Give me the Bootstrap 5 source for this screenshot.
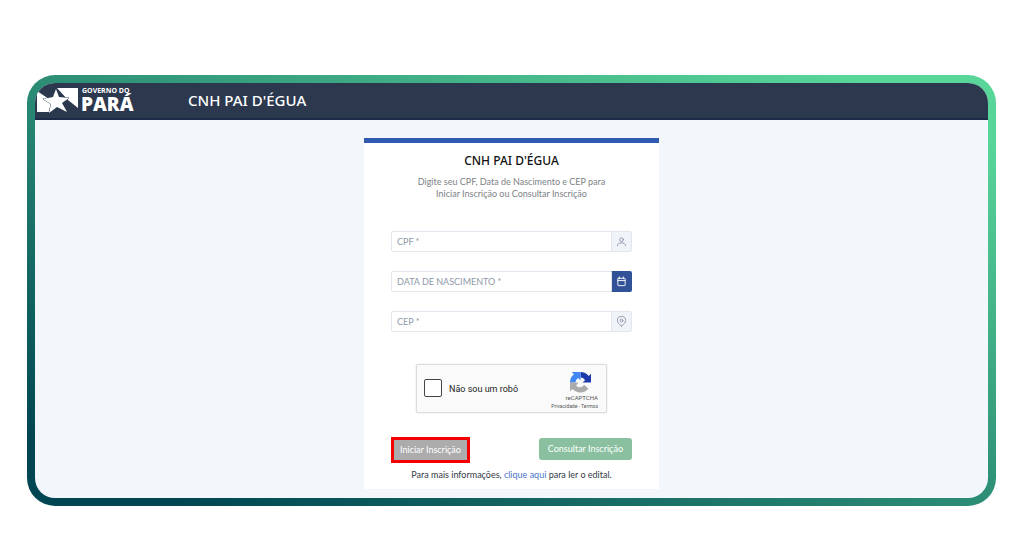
<!DOCTYPE html>
<html lang="pt-BR">
<head>
<meta charset="utf-8">
<meta name="viewport" content="width=device-width, initial-scale=1">
<title>CNH Pai d'Égua</title>
<link href="https://cdn.jsdelivr.net/npm/bootstrap@5.3.0/dist/css/bootstrap.min.css" rel="stylesheet">
<style>
  body { font-family: Lato, "Noto Sans", sans-serif; font-size: 9px; line-height: 12px; color: #333a45; background: #fff; }
  .frame { margin: 75px 28px 30px 27px; padding: 8px; border-radius: 28px; background: linear-gradient(to top right, #004652 8%, #58d599 92%); }
  .screen { border-radius: 20px; background: #f3f6fa; }
  .topbar { height: 37px; padding: 0 2px 2px; background: #2b384e; border-bottom: 2px solid #1d2a48; color: #fff; }
  .topbar-title { margin: 0 0 0 47px; font-family: "Noto Sans", sans-serif; font-size: 15px; line-height: 20px; font-weight: 500; }
  .brand-text { font-family: "Open Sans", sans-serif; fill: #fff; }
  .panel { width: 295px; margin-top: 18px; margin-bottom: 9px; padding: 9px 27px 8px; border-top: 5px solid #2f5bb0; background: #fff; }
  .panel-title { margin: 0 0 6px; font-family: "Noto Sans", sans-serif; font-size: 12px; line-height: 18px; font-weight: 500; color: #111; }
  .intro { margin: 0 0 31px; color: #7d8286; }
  .field { height: 21px; margin-bottom: 19px; flex-wrap: nowrap; }
  .field .form-control { min-height: 0; padding: 0 5px; font-size: 9px; line-height: 19px; border: 1px solid #e3e7ed; border-radius: 2px; }
  .field .form-control::placeholder { color: #8e98a8; opacity: 1; }
  .field .input-group-text { width: 21px; padding: 0; justify-content: center; border: 1px solid #e3e7ed; border-radius: 2px; background: #f0f3f8; color: #8b94a8; }
  .field .picker { width: 21px; padding: 0; display: flex; align-items: center; justify-content: center; border: 0; border-radius: 2px; background: #315296; color: #fff; }
  .icon { width: 11px; height: 11px; fill: none; stroke: currentColor; stroke-width: 2; stroke-linecap: round; stroke-linejoin: round; }
  .captcha { width: 191px; height: 49px; margin: 32px auto 24px; padding: 0 8px 0 7px; border: 1px solid #dcdcdc; border-radius: 2px; background: #fafafa; box-shadow: 0 0 2px #ddd; font-family: Roboto, sans-serif; color: #222; }
  .captcha .form-check-input { width: 18px; height: 18px; margin: 0 0 2px; border: 1px solid #444; border-radius: 2px; }
  .captcha-label { margin-left: 7px; font-size: 9px; }
  .captcha-brand { margin-top: 4px; font-size: 6px; line-height: 8px; color: #555; }
  .captcha-mark { margin: 0 7px 1px 0; }
  .captcha-links { font-size: 5px; }
  .captcha-links a { color: #555; }
  .action { height: 22px; padding: 0 9px; font-size: 9px; line-height: 20px; border: 0; border-radius: 3px; color: #fff; }
  .action-start { height: 26px; padding: 0 6px; background: #acacac; border: 3px solid #f40000; border-radius: 0; }
  .action-check { margin-top: 1px; background: #8abf9f; }
  .more { margin: 6px 0 0; }
  .more a { color: #4a77c9; }
</style>
</head>
<body>
<div class="frame">
  <div class="screen overflow-hidden">
    <header class="topbar d-flex align-items-center">
      <svg width="104" height="32" viewBox="0 -2 104 32" role="img" aria-label="Governo do Pará">
        <path d="M0 5 15 15 12 26H0ZM20 2H41V22L31 14Z" fill="#fff"/>
        <path d="M19 3 22 11 32 12 25 17 30 26 20 21 12 27 14 18 6 13 16 11Z" fill="#fff" stroke="#2b384e" stroke-width=".8" paint-order="stroke"/>
        <text class="brand-text" x="45" y="7" font-size="7" font-weight="700">GOVERNO DO</text>
        <text class="brand-text" x="44" y="25" font-size="19" font-weight="800">PARÁ</text>
      </svg>
      <h1 class="topbar-title">CNH PAI D'ÉGUA</h1>
    </header>
    <main class="d-flex justify-content-center">
      <form class="panel">
        <h2 class="panel-title text-center">CNH PAI D'ÉGUA</h2>
        <p class="intro text-center">Digite seu CPF, Data de Nascimento e CEP para<br>Iniciar Inscrição ou Consultar Inscrição</p>
        <div class="field input-group">
          <input class="form-control" type="text" id="cpf" placeholder="CPF *" aria-label="CPF">
          <label class="input-group-text" for="cpf"><svg class="icon" viewBox="0 0 24 24"><circle cx="12" cy="8" r="4"/><path d="M3 21c0-4 4-6 9-6s9 2 9 6"/></svg></label>
        </div>
        <div class="field input-group">
          <input class="form-control" type="text" id="birth" placeholder="DATA DE NASCIMENTO *" aria-label="Data de nascimento">
          <button class="picker" type="button" aria-label="Abrir calendário"><svg class="icon" viewBox="0 0 24 24"><rect x="4" y="5" width="16" height="16" rx="1"/><path d="M4 10h16M8 2v4M16 2v4"/></svg></button>
        </div>
        <div class="field input-group">
          <input class="form-control" type="text" id="cep" placeholder="CEP *" aria-label="CEP">
          <label class="input-group-text" for="cep"><svg class="icon" viewBox="0 0 24 24"><path d="M12 22C7 18 3 14 3 10a9 9 0 0 1 18 0c0 4-4 8-9 12Z"/><circle cx="12" cy="10" r="3"/></svg></label>
        </div>
        <div class="captcha d-flex align-items-center">
          <input class="form-check-input" type="checkbox" id="robot">
          <label class="captcha-label" for="robot">Não sou um robô</label>
          <div class="captcha-brand ms-auto d-flex flex-column align-items-end">
            <svg class="captcha-mark" width="21" height="21" viewBox="0 0 64 64" aria-hidden="true">
              <path d="M64 32V5l-7 7A32 32 0 0 0 32 0v17c7 0 11 4 14 8l-8 7Z" fill="#1c3aa9"/>
              <path d="M32 0H5l7 7A32 32 0 0 0 0 32h17c0-7 4-11 8-14l7 8Z" fill="#4285f4"/>
              <path d="M0 32v27l8-7a32 32 0 0 0 48-1L43 39c-6 10-19 10-24 1l7-8Z" fill="#ababab"/>
            </svg>
            <span>reCAPTCHA</span>
            <span class="captcha-links"><a class="text-decoration-none" href="#">Privacidade</a> - <a class="text-decoration-none" href="#">Termos</a></span>
          </div>
        </div>
        <div class="d-flex justify-content-between align-items-start">
          <button class="action action-start" type="button">Iniciar Inscrição</button>
          <button class="action action-check" type="button">Consultar Inscrição</button>
        </div>
        <p class="more text-center">Para mais informações, <a class="text-decoration-none" href="#">clique aqui</a> para ler o edital.</p>
      </form>
    </main>
  </div>
</div>
<script src="https://cdn.jsdelivr.net/npm/bootstrap@5.3.0/dist/js/bootstrap.bundle.min.js"></script>
</body>
</html>
